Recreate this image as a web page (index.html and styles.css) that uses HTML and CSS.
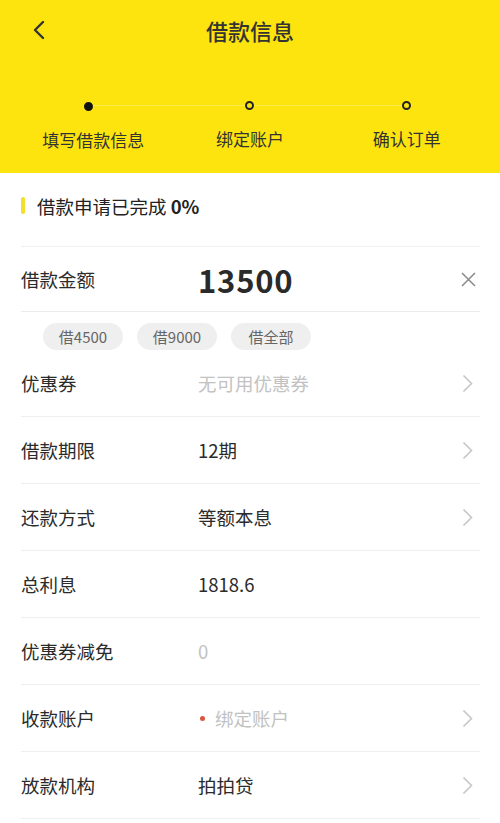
FILE: index.html
```html
<!DOCTYPE html>
<html lang="zh-CN">
<head>
<meta charset="utf-8">
<title>借款信息</title>
<link rel="stylesheet" href="styles.css">
</head>
<body>
<header class="header">
  <div class="nav">
    <div class="nav-back">
      <svg width="14" height="20" viewBox="0 0 14 20"><path d="M11 2 L3 10 L11 18" fill="none" stroke="#333" stroke-width="2.4" stroke-linecap="round" stroke-linejoin="round"/></svg>
    </div>
    <div class="nav-title">借款信息</div>
    <div></div>
  </div>
  <div class="steps">
    <div class="steps-line"></div>
    <div class="step"><span class="dot dot-on"></span><span class="step-label">填写借款信息</span></div>
    <div class="step"><span class="dot"></span><span class="step-label">绑定账户</span></div>
    <div class="step"><span class="dot"></span><span class="step-label">确认订单</span></div>
  </div>
</header>
<main class="content">
  <div class="progress"><span class="progress-bar"></span>借款申请已完成 <b>0%</b></div>
  <div class="row row-amount">
    <span class="label">借款金额</span>
    <span class="amount">13500</span>
    <svg class="clear" width="15" height="15" viewBox="0 0 15 15"><path d="M1 1 L14 14 M14 1 L1 14" stroke="#8a8a8a" stroke-width="1.5"/></svg>
  </div>
  <div class="chips">
    <span class="chip">借4500</span>
    <span class="chip">借9000</span>
    <span class="chip">借全部</span>
  </div>
  <div class="row">
    <span class="label">优惠券</span>
    <span class="value muted">无可用优惠券</span>
    <svg class="chev" width="11" height="19" viewBox="0 0 11 19"><path d="M1.5 1.5 L9.5 9.5 L1.5 17.5" fill="none" stroke="#c6c6c6" stroke-width="1.6"/></svg>
  </div>
  <div class="row">
    <span class="label">借款期限</span>
    <span class="value">12期</span>
    <svg class="chev" width="11" height="19" viewBox="0 0 11 19"><path d="M1.5 1.5 L9.5 9.5 L1.5 17.5" fill="none" stroke="#c6c6c6" stroke-width="1.6"/></svg>
  </div>
  <div class="row">
    <span class="label">还款方式</span>
    <span class="value">等额本息</span>
    <svg class="chev" width="11" height="19" viewBox="0 0 11 19"><path d="M1.5 1.5 L9.5 9.5 L1.5 17.5" fill="none" stroke="#c6c6c6" stroke-width="1.6"/></svg>
  </div>
  <div class="row">
    <span class="label">总利息</span>
    <span class="value">1818.6</span>
  </div>
  <div class="row">
    <span class="label">优惠券减免</span>
    <span class="value muted">0</span>
  </div>
  <div class="row">
    <span class="label">收款账户</span>
    <span class="value muted"><span class="red-dot"></span>绑定账户</span>
    <svg class="chev" width="11" height="19" viewBox="0 0 11 19"><path d="M1.5 1.5 L9.5 9.5 L1.5 17.5" fill="none" stroke="#c6c6c6" stroke-width="1.6"/></svg>
  </div>
  <div class="row">
    <span class="label">放款机构</span>
    <span class="value">拍拍贷</span>
    <svg class="chev" width="11" height="19" viewBox="0 0 11 19"><path d="M1.5 1.5 L9.5 9.5 L1.5 17.5" fill="none" stroke="#c6c6c6" stroke-width="1.6"/></svg>
  </div>
</main>
</body>
</html>
```
FILE: styles.css
```css
* { box-sizing: border-box; }
body {
  margin: 0;
  background: #fff;
  color: #2b2b2b;
  font-family: "Noto Sans CJK SC", "Noto Sans", "Liberation Sans", sans-serif;
}
.header {
  background: #fde40f;
  height: 173px;
}
.nav {
  height: 62px;
  display: grid;
  grid-template-columns: 80px 1fr 80px;
  align-items: center;
  padding-bottom: 3px;
}
.nav-back {
  padding-left: 32px;
  display: flex;
  align-items: center;
}
.nav-title {
  text-align: center;
  font-size: 22px;
  font-weight: 500;
  color: #333;
}
.steps {
  position: relative;
  display: grid;
  grid-template-columns: repeat(3, 1fr);
  padding: 0 15px;
  margin-top: 39px;
}
.steps-line {
  position: absolute;
  left: 93px;
  right: 93px;
  top: 4px;
  height: 1px;
  background: rgba(255, 255, 255, 0.25);
}
.step {
  display: flex;
  flex-direction: column;
  align-items: center;
  position: relative;
}
.dot {
  width: 9px;
  height: 9px;
  border-radius: 50%;
  border: 2px solid #222;
  background: #fde40f;
}
.dot-on {
  background: #111;
  border-color: #111;
  margin-right: 10px;
  margin-top: 1px;
}
.step-label {
  margin-top: 17px;
  font-size: 17px;
  line-height: 24px;
  color: #333;
}
.step:first-child .step-label { margin-top: 16px; }
.content {
  padding: 0 20px 0 21px;
}
.progress {
  height: 74px;
  border-bottom: 1px solid #f0f0f0;
  display: flex;
  align-items: center;
  font-size: 18.5px;
  color: #222;
  padding-bottom: 8px;
  white-space: pre;
}
.progress b { font-weight: 700; }
.progress-bar {
  width: 4px;
  height: 17px;
  border-radius: 2px;
  background: #f3e02a;
  margin-right: 12px;
}
.row {
  height: 67px;
  border-bottom: 1px solid #efefef;
  display: flex;
  align-items: center;
}
.row-amount {
  height: 65px;
  border-bottom-color: #ececec;
}
.label {
  width: 177px;
  flex: none;
  font-size: 18.5px;
  color: #2b2b2b;
}
.value {
  flex: 1;
  font-size: 18.5px;
  color: #2b2b2b;
  display: flex;
  align-items: center;
}
.muted { color: #c2c2c2; }
.amount {
  flex: 1;
  font-size: 31px;
  font-weight: 700;
  color: #2a2a2a;
  letter-spacing: 0.8px;
}
.clear {
  margin-right: 4px;
}
.chev {
  margin-right: 7px;
}
.chips {
  height: 38px;
  padding: 11px 0 0 22px;
  display: flex;
  gap: 14px;
}
.chip {
  width: 80px;
  height: 27px;
  border-radius: 14px;
  background: #efefef;
  color: #666;
  font-size: 15px;
  display: flex;
  align-items: center;
  justify-content: center;
}
.red-dot {
  width: 5px;
  height: 5px;
  border-radius: 50%;
  background: #d9553c;
  margin: 0 10px 0 2px;
}
```
